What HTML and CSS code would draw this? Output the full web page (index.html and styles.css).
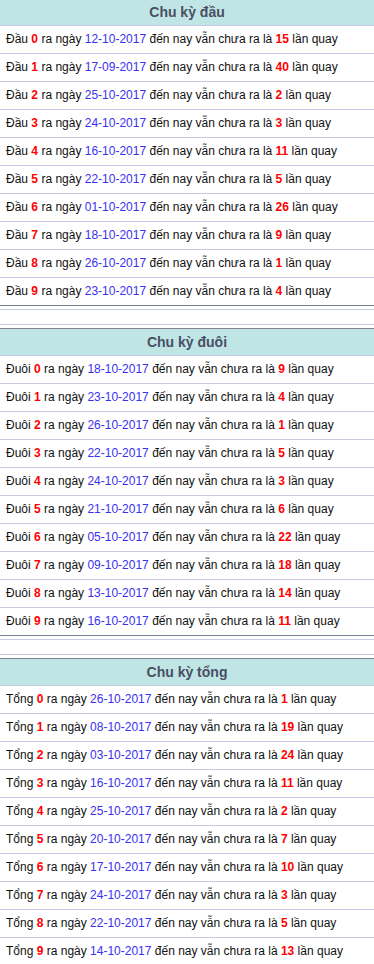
FILE: index.html
```html
<!DOCTYPE html>
<html>
<head>
<meta charset="utf-8">
<link rel="stylesheet" href="styles.css">
</head>
<body>
<div class="page">
  <div class="section">
    <div class="head">Chu kỳ đầu</div>
    <div class="row">Đầu <b class="n">0</b> ra ngày <span class="d">12-10-2017</span> đến nay vẫn chưa ra là <b class="n">15</b> lần quay</div>
    <div class="row">Đầu <b class="n">1</b> ra ngày <span class="d">17-09-2017</span> đến nay vẫn chưa ra là <b class="n">40</b> lần quay</div>
    <div class="row">Đầu <b class="n">2</b> ra ngày <span class="d">25-10-2017</span> đến nay vẫn chưa ra là <b class="n">2</b> lần quay</div>
    <div class="row">Đầu <b class="n">3</b> ra ngày <span class="d">24-10-2017</span> đến nay vẫn chưa ra là <b class="n">3</b> lần quay</div>
    <div class="row">Đầu <b class="n">4</b> ra ngày <span class="d">16-10-2017</span> đến nay vẫn chưa ra là <b class="n">11</b> lần quay</div>
    <div class="row">Đầu <b class="n">5</b> ra ngày <span class="d">22-10-2017</span> đến nay vẫn chưa ra là <b class="n">5</b> lần quay</div>
    <div class="row">Đầu <b class="n">6</b> ra ngày <span class="d">01-10-2017</span> đến nay vẫn chưa ra là <b class="n">26</b> lần quay</div>
    <div class="row">Đầu <b class="n">7</b> ra ngày <span class="d">18-10-2017</span> đến nay vẫn chưa ra là <b class="n">9</b> lần quay</div>
    <div class="row">Đầu <b class="n">8</b> ra ngày <span class="d">26-10-2017</span> đến nay vẫn chưa ra là <b class="n">1</b> lần quay</div>
    <div class="row">Đầu <b class="n">9</b> ra ngày <span class="d">23-10-2017</span> đến nay vẫn chưa ra là <b class="n">4</b> lần quay</div>
  </div>
  <div class="sep"></div>
  <div class="section">
    <div class="head">Chu kỳ đuôi</div>
    <div class="row">Đuôi <b class="n">0</b> ra ngày <span class="d">18-10-2017</span> đến nay vẫn chưa ra là <b class="n">9</b> lần quay</div>
    <div class="row">Đuôi <b class="n">1</b> ra ngày <span class="d">23-10-2017</span> đến nay vẫn chưa ra là <b class="n">4</b> lần quay</div>
    <div class="row">Đuôi <b class="n">2</b> ra ngày <span class="d">26-10-2017</span> đến nay vẫn chưa ra là <b class="n">1</b> lần quay</div>
    <div class="row">Đuôi <b class="n">3</b> ra ngày <span class="d">22-10-2017</span> đến nay vẫn chưa ra là <b class="n">5</b> lần quay</div>
    <div class="row">Đuôi <b class="n">4</b> ra ngày <span class="d">24-10-2017</span> đến nay vẫn chưa ra là <b class="n">3</b> lần quay</div>
    <div class="row">Đuôi <b class="n">5</b> ra ngày <span class="d">21-10-2017</span> đến nay vẫn chưa ra là <b class="n">6</b> lần quay</div>
    <div class="row">Đuôi <b class="n">6</b> ra ngày <span class="d">05-10-2017</span> đến nay vẫn chưa ra là <b class="n">22</b> lần quay</div>
    <div class="row">Đuôi <b class="n">7</b> ra ngày <span class="d">09-10-2017</span> đến nay vẫn chưa ra là <b class="n">18</b> lần quay</div>
    <div class="row">Đuôi <b class="n">8</b> ra ngày <span class="d">13-10-2017</span> đến nay vẫn chưa ra là <b class="n">14</b> lần quay</div>
    <div class="row">Đuôi <b class="n">9</b> ra ngày <span class="d">16-10-2017</span> đến nay vẫn chưa ra là <b class="n">11</b> lần quay</div>
  </div>
  <div class="sep"></div>
  <div class="section">
    <div class="head">Chu kỳ tổng</div>
    <div class="row">Tổng <b class="n">0</b> ra ngày <span class="d">26-10-2017</span> đến nay vẫn chưa ra là <b class="n">1</b> lần quay</div>
    <div class="row">Tổng <b class="n">1</b> ra ngày <span class="d">08-10-2017</span> đến nay vẫn chưa ra là <b class="n">19</b> lần quay</div>
    <div class="row">Tổng <b class="n">2</b> ra ngày <span class="d">03-10-2017</span> đến nay vẫn chưa ra là <b class="n">24</b> lần quay</div>
    <div class="row">Tổng <b class="n">3</b> ra ngày <span class="d">16-10-2017</span> đến nay vẫn chưa ra là <b class="n">11</b> lần quay</div>
    <div class="row">Tổng <b class="n">4</b> ra ngày <span class="d">25-10-2017</span> đến nay vẫn chưa ra là <b class="n">2</b> lần quay</div>
    <div class="row">Tổng <b class="n">5</b> ra ngày <span class="d">20-10-2017</span> đến nay vẫn chưa ra là <b class="n">7</b> lần quay</div>
    <div class="row">Tổng <b class="n">6</b> ra ngày <span class="d">17-10-2017</span> đến nay vẫn chưa ra là <b class="n">10</b> lần quay</div>
    <div class="row">Tổng <b class="n">7</b> ra ngày <span class="d">24-10-2017</span> đến nay vẫn chưa ra là <b class="n">3</b> lần quay</div>
    <div class="row">Tổng <b class="n">8</b> ra ngày <span class="d">22-10-2017</span> đến nay vẫn chưa ra là <b class="n">5</b> lần quay</div>
    <div class="row">Tổng <b class="n">9</b> ra ngày <span class="d">14-10-2017</span> đến nay vẫn chưa ra là <b class="n">13</b> lần quay</div>
  </div>
</div>
</body>
</html>
```

FILE: styles.css
```css
html, body {
  margin: 0;
  padding: 0;
  background: #ffffff;
}
body {
  font-family: "Liberation Sans", Arial, sans-serif;
  font-size: 12px;
  color: #111111;
  overflow: hidden;
}
.page {
  margin-top: -2px;
}
.section {
  border-top: 1px solid #7d8191;
}
.head {
  height: 26px;
  line-height: 26px;
  background: #bfe6e4;
  color: #4a4e64;
  font-weight: bold;
  font-size: 14px;
  text-align: center;
  border-bottom: 1px solid #c5cbe6;
}
.row {
  height: 27px;
  line-height: 27px;
  padding-left: 6px;
  border-bottom: 1px solid #c5cbe6;
  white-space: nowrap;
}
.row:last-child {
  border-bottom-color: #7d8191;
}
.n {
  color: #ff0000;
  font-weight: bold;
}
.d {
  color: #3a30f0;
}
.sep {
  margin: 3px 0;
  height: 14px;
  border-top: 1px solid #c5cbe6;
  border-bottom: 1px solid #c5cbe6;
}
```
